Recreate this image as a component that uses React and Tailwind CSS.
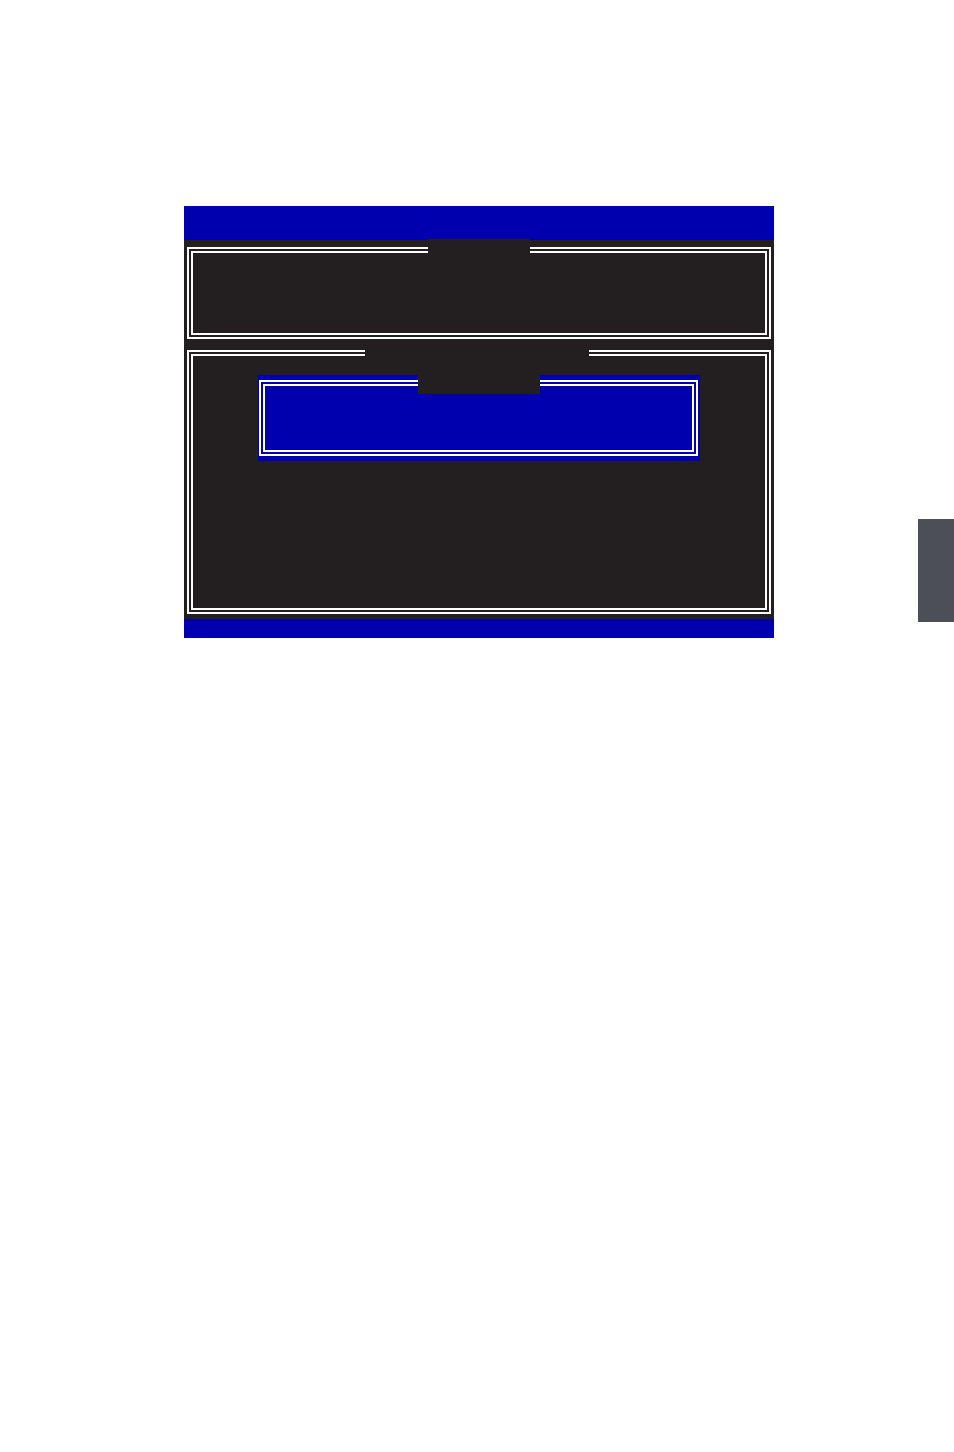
import React from 'react';

// Double-line frame drawn the way text-mode BIOS screens draw boxes
const DoubleFrame = ({ className = '', children }) => (
  <div className={`border-2 border-white p-[2px] ${className}`}>
    <div className="h-full border-2 border-white">{children}</div>
  </div>
);

const RaidSetupScreen = () => {
  return (
    <div className="ml-[184px] mt-[206px] flex w-[590px] flex-col">
      {/* title bar */}
      <div className="h-[34px] bg-[#0000af]" />

      <div className="flex h-[379px] flex-col bg-[#231f20] px-[3px] pt-[7px]">
        {/* upper panel */}
        <div className="relative h-[92px]">
          <DoubleFrame className="h-full" />
          <div className="absolute left-[241px] top-[-8px] h-[14px] w-[102px] bg-[#231f20]" />
        </div>

        {/* lower panel */}
        <div className="relative mt-[11px] h-[264px]">
          <DoubleFrame className="h-full">
            <div className="ml-[65px] mt-[19px] w-[442px]">
              {/* popup dialog */}
              <div className="relative h-[86px] bg-[#0000af] pb-[5px] pl-px pr-[2px] pt-[5px]">
                <DoubleFrame className="h-full" />
                <div className="absolute left-[160px] top-0 h-[19px] w-[122px] bg-[#231f20]" />
              </div>
            </div>
          </DoubleFrame>
          <div className="absolute left-[178px] top-[-1px] h-[7px] w-[224px] bg-[#231f20]" />
        </div>
      </div>

      {/* status bar */}
      <div className="h-[19px] bg-[#0000af]" />
    </div>
  );
};

const App = () => {
  return (
    <div className="flex h-[1452px] w-[954px] items-start bg-white font-['Liberation_Sans',sans-serif]">
      <RaidSetupScreen />
      {/* chapter tab on the page edge */}
      <div className="ml-auto mt-[519px] h-[103px] w-[36px] bg-[#4c4f58]" />
    </div>
  );
};

export default App;
